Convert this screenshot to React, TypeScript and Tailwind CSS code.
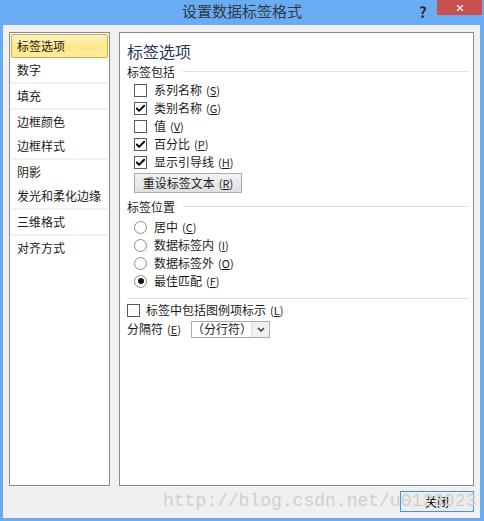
import { Check, X } from 'lucide-react';

const font = { fontFamily: '"Noto Sans CJK SC", "Noto Sans", sans-serif' };

const groups: string[][] = [
  ['标签选项', '数字'],
  ['填充'],
  ['边框颜色', '边框样式'],
  ['阴影', '发光和柔化边缘'],
  ['三维格式'],
  ['对齐方式'],
];

function Key({ k }: { k: string }) {
  return (
    <span className="ml-[4px] text-[11px]">
      (<span className="underline">{k}</span>)
    </span>
  );
}

function CheckBox({ checked }: { checked?: boolean }) {
  return (
    <span className="flex items-center justify-center w-[13px] h-[13px] border border-[#5a5a5a] bg-white shrink-0">
      {checked && <Check className="w-[11px] h-[11px] text-black" strokeWidth={4} />}
    </span>
  );
}

function Radio({ checked }: { checked?: boolean }) {
  return (
    <span className="flex items-center justify-center w-[13px] h-[13px] rounded-full border border-[#8c8c8c] bg-white shrink-0">
      {checked && <span className="w-[6px] h-[6px] rounded-full bg-[#1a1a1a]" />}
    </span>
  );
}

function GroupTitle({ label }: { label: string }) {
  return (
    <div className="flex items-center gap-[8px] h-[19px] pr-[5px]">
      <span>{label}</span>
      <span className="flex-1 h-px bg-[#d9dfe4]" />
    </div>
  );
}

const checks = [
  { label: '系列名称', k: 'S', on: false },
  { label: '类别名称', k: 'G', on: true },
  { label: '值', k: 'V', on: false },
  { label: '百分比', k: 'P', on: true },
  { label: '显示引导线', k: 'H', on: true },
];

const radios = [
  { label: '居中', k: 'C', on: false },
  { label: '数据标签内', k: 'I', on: false },
  { label: '数据标签外', k: 'O', on: false },
  { label: '最佳匹配', k: 'F', on: true },
];

export default function App() {
  return (
    <div
      className="relative w-[484px] h-[521px] bg-[#6aacf3] flex flex-col text-[12px] text-[#1a1a1a] overflow-hidden"
      style={font}
    >
      {/* title bar */}
      <div className="relative h-[25px] shrink-0 flex items-center justify-center">
        <span className="text-[15px] text-[#2e3a48] pb-[3px]">设置数据标签格式</span>
        <span className="absolute left-[419px] top-[1px] text-[15px] font-bold text-[#252b33]">?</span>
        <span className="absolute left-[437px] top-0 w-[45px] h-[15px] bg-[#c75050] flex items-center justify-center">
          <X className="w-[10px] h-[10px] text-white" strokeWidth={3} />
        </span>
      </div>

      {/* client */}
      <div className="flex-1 ml-[3px] mr-[4px] mb-[4px] bg-[#f0f0f0] flex flex-col px-[6px] pt-[7px] pb-[6px]">
        <div className="flex gap-[9px] h-[454px]">
          {/* left list */}
          <div className="w-[101px] border border-[#8b8b8b] bg-white px-px pt-px">
            {groups.map((g, gi) => (
              <div key={gi}>
                {gi > 0 && <div className="h-[2px] bg-[#f0f0f6]" />}
                {g.map((item) => {
                  const sel = item === '标签选项';
                  return (
                    <div
                      key={item}
                      className={
                        sel
                          ? 'h-[24px] flex items-center pl-[5px] rounded-[2px] border border-[#d9a840] bg-gradient-to-b from-[#fff4c8] via-[#ffe68a] to-[#ffec9c]'
                          : 'h-[24px] flex items-center pl-[6px]'
                      }
                    >
                      {item}
                    </div>
                  );
                })}
              </div>
            ))}
          </div>

          {/* right panel */}
          <div className="flex-1 border border-[#8b8b8b] bg-white pl-[7px] pt-[7px]">
            <div className="h-[22px] flex items-center text-[16px] text-[#1e395b]">标签选项</div>
            <GroupTitle label="标签包括" />
            <div className="pl-[7px]">
              {checks.map((c) => (
                <div key={c.label} className="h-[18px] flex items-center gap-[7px]">
                  <CheckBox checked={c.on} />
                  <span>
                    {c.label}
                    <Key k={c.k} />
                  </span>
                </div>
              ))}
              <button
                className="mt-[2px] h-[20px] w-[108px] flex items-center justify-center border border-[#acacac] bg-gradient-to-b from-[#f2f2f2] to-[#e0e0e0] text-[12px]"
                style={font}
              >
                重设标签文本
                <Key k="R" />
              </button>
            </div>
            <div className="mt-[4px]">
              <GroupTitle label="标签位置" />
            </div>
            <div className="pl-[7px] mt-[2px]">
              {radios.map((r) => (
                <div key={r.label} className="h-[18px] flex items-center gap-[7px]">
                  <Radio checked={r.on} />
                  <span>
                    {r.label}
                    <Key k={r.k} />
                  </span>
                </div>
              ))}
            </div>
            <div className="mt-[8px] mr-[5px] h-px bg-[#d9dfe4]" />
            <div className="mt-[2px] h-[18px] flex items-center gap-[6px]">
              <CheckBox />
              <span>
                标签中包括图例项标示
                <Key k="L" />
              </span>
            </div>
            <div className="h-[20px] flex items-center">
              <span className="w-[64px]">
                分隔符
                <Key k="E" />
              </span>
              <div className="h-[17px] w-[79px] border border-[#ababab] flex">
                <span className="flex-1 flex items-center justify-center">（分行符）</span>
                <span className="w-[18px] bg-[#f0f0f0] border-l border-[#dcdcdc] flex items-center justify-center">
                  <svg width="8" height="5" viewBox="0 0 8 5">
                    <path d="M1 1 L4 4 L7 1" fill="none" stroke="#404040" strokeWidth="1.6" />
                  </svg>
                </span>
              </div>
            </div>
          </div>
        </div>

        {/* bottom */}
        <div className="flex justify-end mt-[5px] pr-[0px]">
          <button
            className="w-[74px] h-[21px] border border-[#3d95e8] bg-[#ececec] flex items-center justify-center text-[12px] text-black"
            style={font}
          >
            关闭
          </button>
        </div>
      </div>

      {/* watermark */}
      <div
        className="absolute left-[163px] top-[488px] text-[18px] text-[#cfcfcf] pointer-events-none whitespace-nowrap"
        style={{ fontFamily: '"Liberation Mono", monospace' }}
      >
        http://blog.csdn.net/u0123023
      </div>
    </div>
  );
}
